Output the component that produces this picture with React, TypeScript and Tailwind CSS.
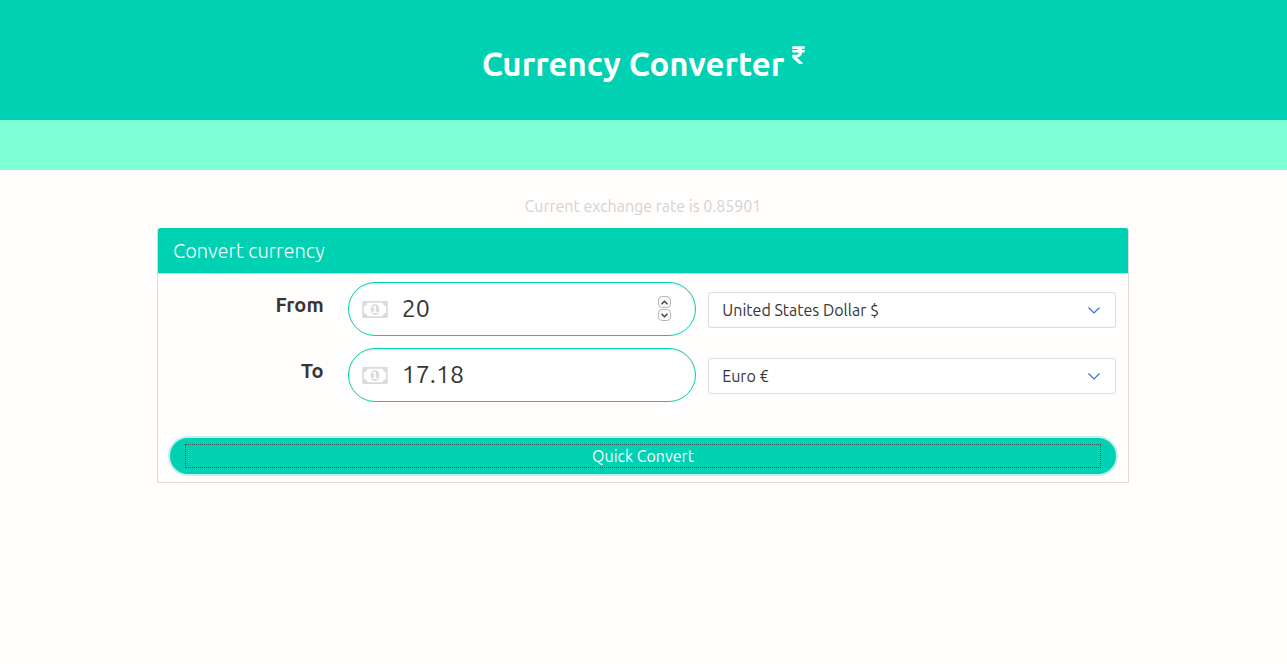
import { useState } from "react";
import { FaRupeeSign } from "react-icons/fa";

type SelectProps = { label: string; options: string[] };

function MoneyIcon() {
  return (
    <svg
      aria-hidden="true"
      viewBox="0 256 1920 1280"
      fill="#dbdbdb"
      fillRule="evenodd"
      className="pointer-events-none absolute top-[19px] left-[14px] h-[17px] w-[26px]"
    >
      <path d="M768 1152h384v-96h-128v-448h-114l-148 137 77 80q42-37 55-57h2v288h-128v96zm512-256q0 70-21 142t-59.5 134-101.5 101-138 39-138-39-101.5-101-59.5-134-21-142 21-142 59.5-134 101.5-101 138-39 138 39 101.5 101 59.5 134 21 142zm512 256v-512q-106 0-181-75t-75-181h-1152q0 106-75 181t-181 75v512q106 0 181 75t75 181h1152q0-106 75-181t181-75zm128-832v1152q0 26-19 45t-45 19h-1792q-26 0-45-19t-19-45v-1152q0-26 19-45t45-19h1792q26 0 45 19t19 45z" />
    </svg>
  );
}

function CurrencySelect({ label, options }: SelectProps) {
  return (
    <div className="relative mt-[10px]">
      <select
        aria-label={label}
        className="block h-9 w-full appearance-none rounded-[3px] border border-[#dbdbdb] bg-white pr-10 pl-[13px] text-base text-[#363636] outline-none"
      >
        {options.map((option) => (
          <option key={option}>{option}</option>
        ))}
      </select>
      <svg
        aria-hidden="true"
        viewBox="0 0 12 8"
        className="pointer-events-none absolute top-[15px] right-4 h-2 w-3"
        fill="none"
        stroke="#3273dc"
        strokeWidth="1.2"
      >
        <path d="M.5 .5 6 6 11.5 .5" />
      </svg>
    </div>
  );
}

type RowProps = {
  id: string;
  label: string;
  value: string;
  onChange?: (value: string) => void;
  onStep?: (delta: number) => void;
  options: string[];
};

function Row({ id, label, value, onChange, onStep, options }: RowProps) {
  return (
    <div className="grid grid-cols-[1fr_5fr] gap-6">
      <label htmlFor={id} className="pt-2 text-right text-xl leading-[30px] font-bold text-[#363636]">
        {label}
      </label>
      <div className="grid grid-cols-[349fr_408fr] items-start gap-3">
        <div className="relative">
          <input
            id={id}
            type="text"
            inputMode="decimal"
            value={value}
            readOnly={!onChange}
            onChange={(event) => onChange?.(event.target.value)}
            className="block h-[54px] w-full rounded-full border border-[#00d1b2] bg-white pr-12 pb-[2px] pl-[53px] text-[25px] text-[#363636] shadow-[inset_0_1px_2px_rgba(10,10,10,0.1)] outline-none"
          />
          <MoneyIcon />
          {onStep && (
            <div className="absolute top-[14px] right-[25px] flex flex-col gap-px">
              {[1, -1].map((delta) => (
                <button
                  key={delta}
                  type="button"
                  aria-label={delta > 0 ? "Increase" : "Decrease"}
                  onClick={() => onStep(delta)}
                  className="flex h-3 w-[13px] items-center justify-center rounded-[4px] border border-[#b8b8b8] bg-[#fafafa]"
                >
                  <svg viewBox="0 0 7 5" className="h-[5px] w-[7px]" fill="none" stroke="#3c3c3c" strokeWidth="1.3">
                    <path d={delta > 0 ? "M.5 4.2 3.5 1.2 6.5 4.2" : "M.5 .8 3.5 3.8 6.5 .8"} />
                  </svg>
                </button>
              ))}
            </div>
          )}
        </div>
        <CurrencySelect label={`${label} currency`} options={options} />
      </div>
    </div>
  );
}

export default function App() {
  const [amount, setAmount] = useState("20");
  const converted = (Number(amount) * 0.85901).toFixed(2);

  return (
    <div className="min-h-screen bg-[#fffefd] font-[Ubuntu,'Noto_Sans',sans-serif]">
      <header className="flex h-[120px] items-center justify-center bg-[#00d1b2] pt-2 text-white">
        <h1 className="flex items-start gap-2 text-[33px] leading-[38px] font-bold">
          Currency Converter
          <FaRupeeSign aria-hidden="true" className="h-5 w-[13px]" />
        </h1>
      </header>
      <div className="h-[50px] bg-[#7fffd4]" />
      <main className="pr-px">
        <div className="mx-auto max-w-[972px]">
          <p className="pt-6 pb-[10px] text-center text-base text-[#d3d3d3]">Current exchange rate is 0.85901</p>
          <form onSubmit={(event) => event.preventDefault()}>
            <h2 className="rounded-t-[3px] border-x border-[#dbdbdb] bg-[#00d1b2] px-[15px] pt-[9px] pb-2 text-xl leading-7 font-light text-white">
              Convert currency
            </h2>
            <div className="border border-[#dbdbdb] px-3 py-2">
              <div className="flex flex-col gap-3">
                <Row
                  id="from"
                  label="From"
                  value={amount}
                  onChange={setAmount}
                  onStep={(delta) => setAmount(String(Number(amount) + delta))}
                  options={["United States Dollar $", "Euro €"]}
                />
                <Row id="to" label="To" value={converted} options={["Euro €", "United States Dollar $"]} />
              </div>
              <button
                type="submit"
                className="mt-9 flex h-9 w-full rounded-full bg-[#00d1b2] px-[15px] py-[6px] text-base text-white shadow-[0_0_0_2px_rgba(0,209,178,0.25)]"
              >
                <span className="flex h-6 flex-1 items-center justify-center border border-dotted border-[#4a4a4a]">
                  Quick Convert
                </span>
              </button>
            </div>
          </form>
        </div>
      </main>
    </div>
  );
}
